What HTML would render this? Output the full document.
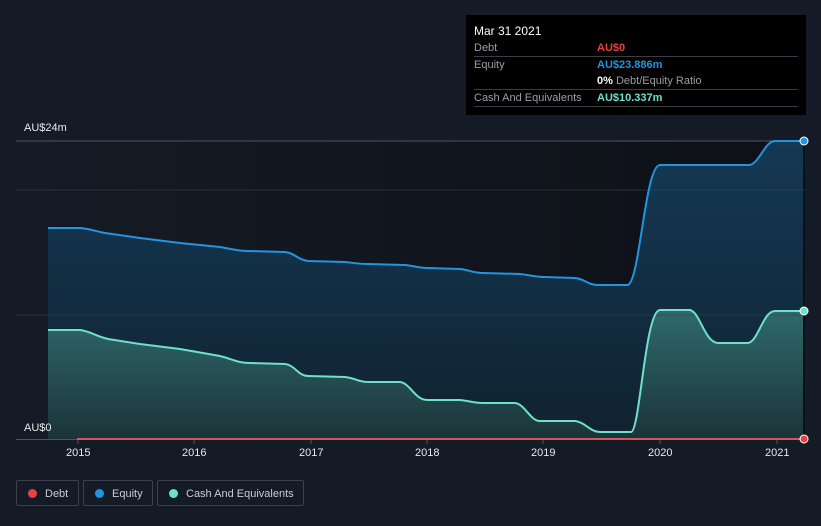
<!DOCTYPE html>
<html><head><style>
body{margin:0;background:#151b26;width:821px;height:526px;overflow:hidden;font-family:"Liberation Sans",sans-serif;position:relative}
.tt{position:absolute;left:466px;top:15px;width:340px;height:100px;background:#000;color:#fff;font-size:11px}
.tt .r{position:absolute;left:8px;right:8px;border-bottom:1px solid #3a3d42;height:16px;line-height:16px}
.tt .l{color:#9a9ea4;position:absolute;left:0;white-space:nowrap}
.tt .v{position:absolute;left:123px;font-weight:bold;white-space:nowrap}
.lg{position:absolute;top:480px;height:26px;border:1px solid #3b4049;border-radius:2px;color:#c9ccd1;font-size:11px;line-height:26px;box-sizing:border-box}
.lg i{position:absolute;left:11px;top:8px;width:9px;height:9px;border-radius:50%}
.lg span{position:absolute;left:28px;white-space:nowrap}
.ax{position:absolute;color:#e6e8eb;font-size:11px}
</style></head><body>
<svg width="821" height="526" style="position:absolute;left:0;top:0">
<defs>
<linearGradient id="ge" x1="0" y1="0" x2="0" y2="1"><stop offset="0" stop-color="#143955"/><stop offset="1" stop-color="#10222f"/></linearGradient>
<linearGradient id="gc" x1="0" y1="0" x2="0" y2="1"><stop offset="0" stop-color="#2f6a6c"/><stop offset="1" stop-color="#1b3338"/></linearGradient>
<linearGradient id="gb" x1="0" y1="0" x2="1" y2="0"><stop offset="0" stop-color="#151b26"/><stop offset="1" stop-color="#0d1016"/></linearGradient>
</defs>
<rect x="16" y="141" width="789" height="298" fill="url(#gb)"/>
<path d="M48,228 L80,228 C90,229 95,231 105,233 L140,238 L180,243 L220,247 C232,249 238,251 248,251 L285,252 C295,253 298,260 308,261 L345,262 C355,263 358,264 368,264 L405,265 C415,266 418,268 428,268 L460,269 C470,270 473,273 483,273 L520,274 C530,275 535,277 545,277 L575,278 C585,279 588,285 598,285 L628,285 C640,280 645,165 660,165 L750,165 C760,162 765,141 775,141 L803,141 L803,439 L48,439 Z" fill="url(#ge)"/>
<path d="M48,330 L80,330 C90,331 95,336 108,339 L140,344 L180,349 L220,356 C232,359 238,363 250,363 L285,364 C295,365 298,376 308,376 L345,377 C355,378 358,382 368,382 L400,382 C410,383 415,400 427,400 L460,400 C470,401 473,403 483,403 L515,403 C525,404 530,421 540,421 L575,421 C585,422 590,432 600,432 L631,432 C640,432 645,310 660,310 L690,310 C700,312 705,343 718,343 L748,343 C758,342 763,311 775,311 L803,311 L803,439 L48,439 Z" fill="url(#gc)"/>
<g stroke="#3a4049" stroke-width="1"><line x1="16" y1="141" x2="805" y2="141" stroke="#50555c"/><line x1="16" y1="190" x2="805" y2="190" stroke-opacity=".6"/><line x1="16" y1="315" x2="805" y2="315" stroke-opacity=".6"/><line x1="16" y1="439.5" x2="805" y2="439.5" stroke="#50555c"/></g>
<path d="M48,228 L80,228 C90,229 95,231 105,233 L140,238 L180,243 L220,247 C232,249 238,251 248,251 L285,252 C295,253 298,260 308,261 L345,262 C355,263 358,264 368,264 L405,265 C415,266 418,268 428,268 L460,269 C470,270 473,273 483,273 L520,274 C530,275 535,277 545,277 L575,278 C585,279 588,285 598,285 L628,285 C640,280 645,165 660,165 L750,165 C760,162 765,141 775,141 L803,141" fill="none" stroke="#2394df" stroke-width="2"/>
<path d="M48,330 L80,330 C90,331 95,336 108,339 L140,344 L180,349 L220,356 C232,359 238,363 250,363 L285,364 C295,365 298,376 308,376 L345,377 C355,378 358,382 368,382 L400,382 C410,383 415,400 427,400 L460,400 C470,401 473,403 483,403 L515,403 C525,404 530,421 540,421 L575,421 C585,422 590,432 600,432 L631,432 C640,432 645,310 660,310 L690,310 C700,312 705,343 718,343 L748,343 C758,342 763,311 775,311 L803,311" fill="none" stroke="#6ee0cc" stroke-width="2"/>
<line x1="77" y1="439" x2="803" y2="439" stroke="#d0575c" stroke-width="2"/>
<g stroke="#50555c"><line x1="78" y1="440" x2="78" y2="444"/><line x1="194" y1="440" x2="194" y2="444"/><line x1="311" y1="440" x2="311" y2="444"/><line x1="427" y1="440" x2="427" y2="444"/><line x1="543" y1="440" x2="543" y2="444"/><line x1="660" y1="440" x2="660" y2="444"/><line x1="777" y1="440" x2="777" y2="444"/></g>
<circle cx="804" cy="141" r="4" fill="#2394df" stroke="#fff" stroke-width="1"/>
<circle cx="804" cy="311" r="4" fill="#6ee0cc" stroke="#fff" stroke-width="1"/>
<circle cx="804" cy="439" r="4" fill="#e8413f" stroke="#fff" stroke-width="1"/>
</svg>
<div class="ax" style="left:24px;top:122px">AU$24m</div>
<div class="ax" style="left:24px;top:422px">AU$0</div>
<div class="ax" style="left:66px;top:447px">2015</div>
<div class="ax" style="left:182px;top:447px">2016</div>
<div class="ax" style="left:299px;top:447px">2017</div>
<div class="ax" style="left:415px;top:447px">2018</div>
<div class="ax" style="left:531px;top:447px">2019</div>
<div class="ax" style="left:648px;top:447px">2020</div>
<div class="ax" style="left:765px;top:447px">2021</div>
<div class="tt">
<div style="position:absolute;left:8px;top:9px;font-size:12px">Mar 31 2021</div>
<div class="r" style="top:25px"><span class="l">Debt</span><span class="v" style="color:#e8413f">AU$0</span></div>
<div class="r" style="top:42px;height:32px"><span class="l">Equity</span><span class="v" style="color:#2394df">AU$23.886m</span><span class="v" style="top:16px;color:#fff">0% <b style="color:#9a9ea4;font-weight:normal">Debt/Equity Ratio</b></span></div>
<div class="r" style="top:75px"><span class="l">Cash And Equivalents</span><span class="v" style="color:#6ee0cc">AU$10.337m</span></div>
</div>
<div class="lg" style="left:16px;width:63px"><i style="background:#e8413f"></i><span>Debt</span></div>
<div class="lg" style="left:83px;width:70px"><i style="background:#2394df"></i><span>Equity</span></div>
<div class="lg" style="left:157px;width:147px"><i style="background:#6ee0cc"></i><span>Cash And Equivalents</span></div>
</body></html>
